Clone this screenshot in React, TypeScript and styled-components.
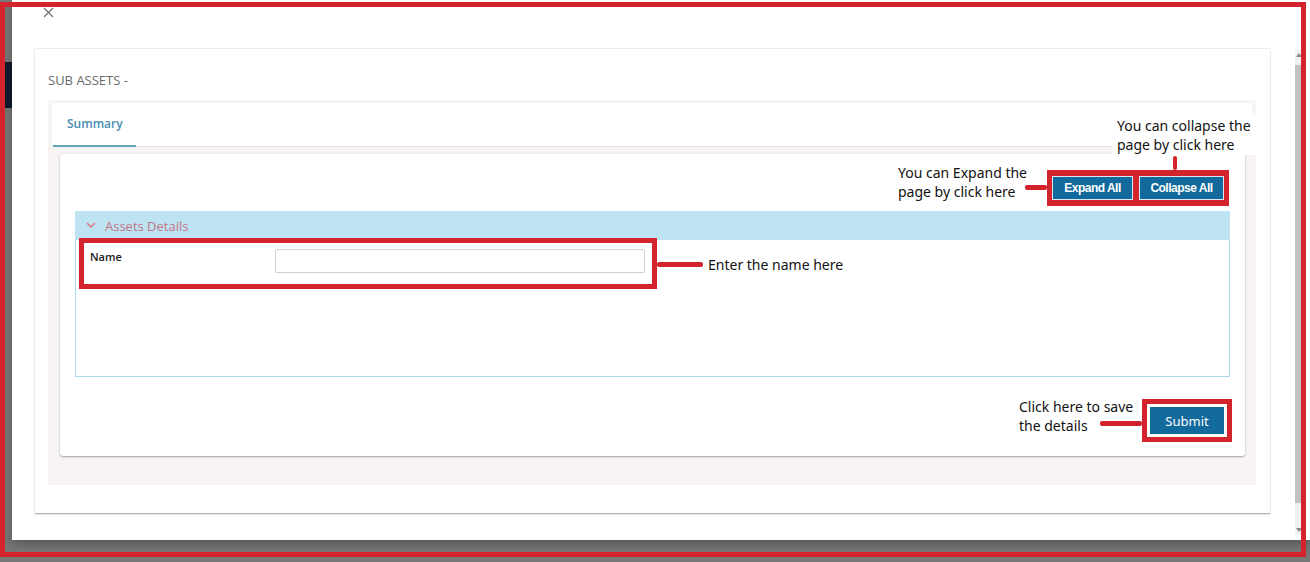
import React from "react";
import styled, { createGlobalStyle } from "styled-components";

const RED = "#d3242e";
const BLUE = "#12699b";
const NOTE_FONT = `"Noto Sans", "Open Sans", sans-serif`;

const GlobalStyle = createGlobalStyle`
  html, body { margin: 0; padding: 0; }
  body {
    width: 1310px;
    height: 562px;
    overflow: hidden;
    background: #777777;
    font-family: "Open Sans", "Noto Sans", sans-serif;
  }
  * { box-sizing: border-box; }
`;

const Screen = styled.div`
  position: relative;
  width: 1310px;
  height: 562px;
  overflow: hidden;
  background: #787878;
`;

const AppBackdrop = styled.div`
  display: flex;
  flex-direction: column;
  height: 100%;
  padding: 62px 0 0 5px;
`;

const NavStub = styled.div`
  width: 40px;
  height: 46px;
  background: #0f1a2b;
`;

const Modal = styled.div`
  position: absolute;
  left: 12px;
  top: 0;
  right: 0;
  height: 540px;
  background: #ffffff;
  box-shadow: 0 4px 10px rgba(0, 0, 0, 0.3);
  display: flex;
  flex-direction: column;
`;

const ModalHeader = styled.div`
  flex: none;
  height: 48px;
  padding: 7px 0 0 31px;
`;

const CloseButton = styled.button`
  display: flex;
  width: 11px;
  height: 11px;
  padding: 0;
  border: 0;
  background: none;
  cursor: pointer;
`;

const ModalBody = styled.div`
  flex: 1;
  display: flex;
  min-height: 0;
`;

const ScrollArea = styled.div`
  flex: 1;
  padding: 0 24px 0 22px;
`;

const Scrollbar = styled.div`
  width: 7px;
  margin: 2px 8px 5px 0;
  padding: 3px 0;
  background: #f1f1f1;
  display: flex;
  flex-direction: column;
  align-items: center;
`;

const ScrollArrow = styled.span<{ $down?: boolean }>`
  width: 0;
  height: 0;
  border-left: 3px solid transparent;
  border-right: 3px solid transparent;
  ${(p) => (p.$down ? "border-top: 4px solid #8a8a8a;" : "border-bottom: 4px solid #8a8a8a;")}
  margin-top: ${(p) => (p.$down ? "auto" : "0")};
`;

const ScrollThumb = styled.span`
  width: 7px;
  height: 438px;
  margin-top: 8px;
  background: #c2c2c2;
`;

const Card = styled.section`
  height: 466px;
  border: 1px solid #ececec;
  border-bottom-color: #b4b4b4;
  border-radius: 2px;
  box-shadow: 0 1px 1px rgba(0, 0, 0, 0.1);
  padding: 0 14px 0 13px;
  display: flex;
  flex-direction: column;
`;

const CardTitle = styled.h2`
  margin: 0;
  height: 51px;
  padding-top: 23px;
  font-size: 13px;
  line-height: 16px;
  font-weight: 400;
  color: #6a6a6a;
  text-transform: uppercase;
`;

const TabsPanel = styled.div`
  height: 385px;
  background: #f8f4f4;
  padding: 3px 4px 0;
  display: flex;
  flex-direction: column;
`;

const TabBar = styled.div`
  height: 44px;
  background: #ffffff;
  border-bottom: 1px solid #e6dfdf;
  display: flex;
  padding-left: 1px;
`;

const Tab = styled.div<{ $active?: boolean }>`
  width: 83px;
  height: 44px;
  margin-bottom: -1px;
  display: flex;
  align-items: center;
  padding: 0 0 1px 14px;
  font-size: 12px;
  font-weight: 600;
  color: #4a8db3;
  border-bottom: 2px solid ${(p) => (p.$active ? "#5fa6b6" : "transparent")};
`;

const TabContent = styled.div`
  padding: 6px 7px 0 8px;
`;

const ContentCard = styled.div`
  height: 303px;
  background: #ffffff;
  border-radius: 3px;
  border-top: 1px solid #f3e6e6;
  box-shadow: 0 1px 2px rgba(0, 0, 0, 0.35);
  padding: 16px 15px 0;
  display: flex;
  flex-direction: column;
`;

const Toolbar = styled.div`
  display: flex;
  justify-content: flex-end;
  padding-right: 1px;
`;

const ButtonGroup = styled.div`
  position: relative;
  display: flex;
  gap: 6px;
  padding: 6px 5px;
  background: ${RED};
`;

const ActionButton = styled.button<{ $w: number }>`
  width: ${(p) => p.$w}px;
  height: 24px;
  padding: 0;
  border: 1px solid #dbe8f1;
  border-radius: 0;
  background: ${BLUE};
  color: #ffffff;
  font-family: "Liberation Sans", Arial, sans-serif;
  font-weight: 700;
  font-size: 12px;
  letter-spacing: -0.5px;
  cursor: pointer;
`;

const Accordion = styled.div`
  margin-top: 5px;
  display: flex;
  flex-direction: column;
`;

const AccordionHeader = styled.div`
  height: 29px;
  background: #bee4f4;
  display: flex;
  align-items: center;
  gap: 9px;
  padding-left: 11px;
  font-size: 13px;
  color: #c27584;
`;

const AccordionBody = styled.div`
  height: 137px;
  border: 1px solid #a9d9ec;
  border-top: 0;
`;

const FormRow = styled.div`
  position: relative;
  display: grid;
  grid-template-columns: 185px 370px;
  align-items: start;
  padding: 9px 0 0 14px;
`;

const FieldLabel = styled.label`
  font-size: 11px;
  line-height: 16px;
  font-weight: 600;
  color: #222222;
`;

const TextInput = styled.input`
  width: 370px;
  height: 24px;
  border: 1px solid #cfcfcf;
  border-radius: 2px;
  padding: 0 6px;
  font-size: 12px;
  outline: none;
`;

const SubmitRow = styled.div`
  margin-top: 30px;
  padding-right: 6px;
  display: flex;
  justify-content: flex-end;
`;

const SubmitWrap = styled.div`
  position: relative;
  display: flex;
`;

const SubmitButton = styled.button`
  width: 74px;
  height: 27px;
  border: 0;
  border-radius: 0;
  background: ${BLUE};
  color: #ffffff;
  font-family: ${NOTE_FONT};
  font-size: 13px;
  outline: 5px solid ${RED};
  outline-offset: 3px;
  cursor: pointer;
`;

/* ---------- annotation overlays ---------- */

const HighlightBox = styled.span<{ $x: number; $y: number; $w: number; $h: number }>`
  position: absolute;
  left: ${(p) => p.$x}px;
  top: ${(p) => p.$y}px;
  width: ${(p) => p.$w}px;
  height: ${(p) => p.$h}px;
  border: 5px solid ${RED};
  pointer-events: none;
`;

const Connector = styled.span<{ $x: number; $y: number; $w: number; $h: number }>`
  position: absolute;
  left: ${(p) => p.$x}px;
  top: ${(p) => p.$y}px;
  width: ${(p) => p.$w}px;
  height: ${(p) => p.$h}px;
  background: ${RED};
  border-radius: 2px;
  pointer-events: none;
`;

const NoteText = styled.span<{ $x: number; $y: number; $boxed?: boolean }>`
  position: absolute;
  left: ${(p) => p.$x}px;
  top: ${(p) => p.$y}px;
  font-family: ${NOTE_FONT};
  font-size: 14px;
  line-height: 19px;
  color: #111111;
  white-space: pre;
  background: ${(p) => (p.$boxed ? "#ffffff" : "transparent")};
  padding: ${(p) => (p.$boxed ? "1px 5px" : "0")};
  pointer-events: none;
`;

const ScreenFrame = styled.div`
  position: absolute;
  left: 0;
  top: 2px;
  width: 1306px;
  height: 555px;
  border: 5px solid ${RED};
  pointer-events: none;
`;

const CloseIcon = () => (
  <svg width="11" height="11" viewBox="0 0 11 11">
    <path d="M1 1 L10 10 M10 1 L1 10" stroke="#707070" strokeWidth="1.2" fill="none" />
  </svg>
);

const ChevronDown = () => (
  <svg width="10" height="7" viewBox="0 0 10 7">
    <polyline points="1,1 5,5 9,1" stroke="#e07d86" strokeWidth="1.6" fill="none" />
  </svg>
);

export default function App() {
  return (
    <>
      <GlobalStyle />
      <Screen>
        <AppBackdrop>
          <NavStub />
        </AppBackdrop>

        <Modal>
          <ModalHeader>
            <CloseButton aria-label="Close">
              <CloseIcon />
            </CloseButton>
          </ModalHeader>
          <ModalBody>
            <ScrollArea>
              <Card>
                <CardTitle>Sub Assets -</CardTitle>
                <TabsPanel>
                  <TabBar>
                    <Tab $active>Summary</Tab>
                  </TabBar>
                  <TabContent>
                    <ContentCard>
                      <Toolbar>
                        <ButtonGroup>
                          <ActionButton $w={81}>Expand All</ActionButton>
                          <ActionButton $w={85}>Collapse All</ActionButton>
                          <NoteText $x={-149} $y={-7}>{"You can Expand the\npage by click here"}</NoteText>
                          <Connector $x={-22} $y={15} $w={22} $h={5} />
                          <NoteText $x={65} $y={-55} $boxed>{"You can collapse the\npage by click here"}</NoteText>
                          <Connector $x={126} $y={-14} $w={4} $h={14} />
                        </ButtonGroup>
                      </Toolbar>

                      <Accordion>
                        <AccordionHeader>
                          <ChevronDown />
                          <span>Assets Details</span>
                        </AccordionHeader>
                        <AccordionBody>
                          <FormRow>
                            <FieldLabel htmlFor="name">Name</FieldLabel>
                            <TextInput id="name" type="text" />
                            <HighlightBox $x={3} $y={-2} $w={578} $h={51} />
                            <Connector $x={581} $y={22} $w={46} $h={5} />
                            <NoteText $x={632} $y={15}>Enter the name here</NoteText>
                          </FormRow>
                        </AccordionBody>
                      </Accordion>

                      <SubmitRow>
                        <SubmitWrap>
                          <SubmitButton>Submit</SubmitButton>
                          <NoteText $x={-131} $y={-10}>{"Click here to save\nthe details"}</NoteText>
                          <Connector $x={-50} $y={14} $w={42} $h={5} />
                        </SubmitWrap>
                      </SubmitRow>
                    </ContentCard>
                  </TabContent>
                </TabsPanel>
              </Card>
            </ScrollArea>
            <Scrollbar>
              <ScrollArrow />
              <ScrollThumb />
              <ScrollArrow $down />
            </Scrollbar>
          </ModalBody>
        </Modal>

        <ScreenFrame />
      </Screen>
    </>
  );
}
